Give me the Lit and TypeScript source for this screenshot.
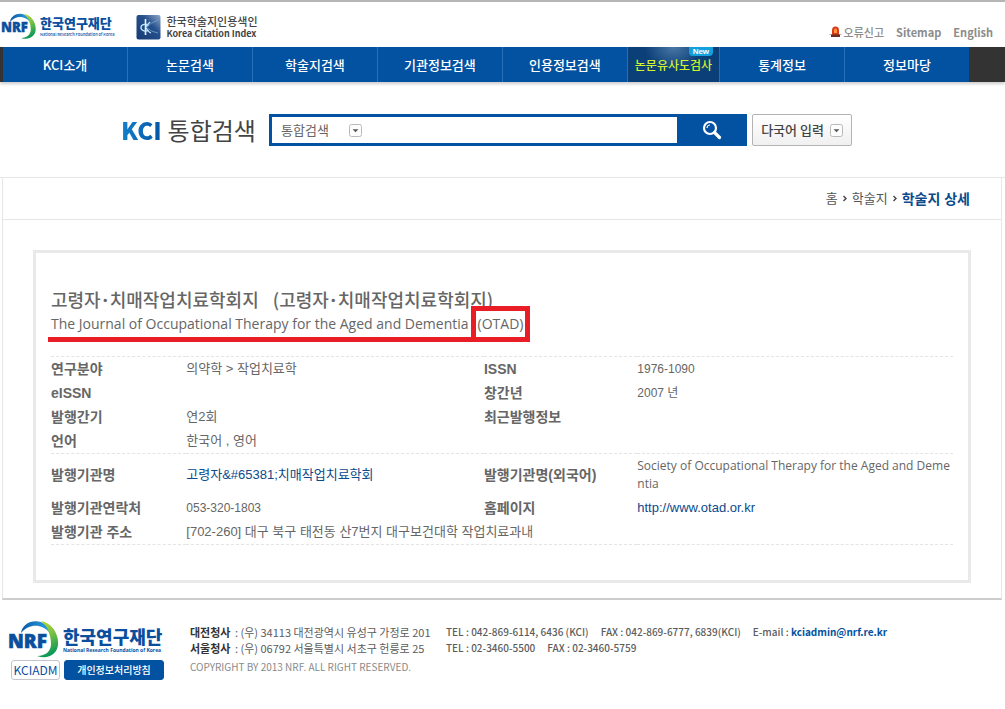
import { LitElement, html, css, svg } from "lit";
import { customElement, property, state } from "lit/decorators.js";

interface MenuItem {
  label: string;
  hot?: boolean;
}

const MENU: MenuItem[] = [
  { label: "KCI소개" },
  { label: "논문검색" },
  { label: "학술지검색" },
  { label: "기관정보검색" },
  { label: "인용정보검색" },
  { label: "논문유사도검사", hot: true },
  { label: "통계정보" },
  { label: "정보마당" },
];

const dropMark = html`<svg class="mark" viewBox="0 0 13 13" width="13" height="13" aria-hidden="true">
  <rect x="0.5" y="0.5" width="12" height="12" rx="2" fill="#fdfdfd" stroke="#b9b9b9" />
  <path d="M3.6 5.2h5.8L6.5 8.3z" fill="#555" />
</svg>`;

@customElement("nrf-logo")
export class NrfLogo extends LitElement {
  @property({ type: Boolean, reflect: true }) large = false;

  static styles = css`
    :host {
      display: flex;
      align-items: center;
      gap: 3px;
      color: #0a4f9e;
      font-family: "Noto Sans CJK KR", sans-serif;
    }
    .emblem {
      width: 36px;
      height: 27px;
      flex: none;
    }
    .names {
      display: flex;
      flex-direction: column;
      white-space: nowrap;
    }
    .ko {
      font-size: 13px;
      line-height: 16px;
      font-weight: 900;
    }
    .en {
      font-size: 4px;
      line-height: 7px;
      font-weight: 500;
    }
    :host([large]) .emblem {
      width: 52px;
      height: 39px;
    }
    :host([large]) .ko {
      font-size: 18px;
      line-height: 20px;
    }
    :host([large]) .en {
      font-family: "Open Sans", sans-serif;
      font-size: 5px;
      line-height: 8px;
      font-weight: bold;
    }
  `;

  render() {
    return html`
      <svg class="emblem" viewBox="0 0 52 39" role="img" aria-label="NRF">
        <defs>
          <linearGradient id="g" x1="0" y1="0" x2="0.3" y2="1">
            <stop offset="0" stop-color="#c3d92b" />
            <stop offset="0.5" stop-color="#7cc142" />
            <stop offset="1" stop-color="#0e9a57" />
          </linearGradient>
          <linearGradient id="b" x1="0" y1="0" x2="1" y2="0">
            <stop offset="0" stop-color="#0a58a6" />
            <stop offset="1" stop-color="#2ba3dc" />
          </linearGradient>
        </defs>
        <path d="M33 1C44 3 51 14 50 25C49 34 40 40 29 36C38 36 43 31 43 24C43 14 39 7 33 1Z" fill="url(#g)" />
        <path d="M13 13C14 4 24-1 33 2C37 4 40 8 41 12C35 5 22 2 13 13Z" fill="url(#b)" />
        ${svg`<text x="0" y="28" font-family="Open Sans" font-weight="800" font-size="19" fill="#0a4f9e" stroke="#0a4f9e" stroke-width="0.6">NRF</text>`}
      </svg>
      <span class="names">
        <span class="ko">한국연구재단</span>
        <span class="en">National Research Foundation of Korea</span>
      </span>
    `;
  }
}

@customElement("app-root")
export class AppRoot extends LitElement {
  @state() private query = "";

  static styles = css`
    :host {
      display: block;
      background: #fff;
      color: #666;
      font: 13px/18px "Liberation Sans", "Noto Sans CJK KR", sans-serif;
    }
    * {
      box-sizing: border-box;
    }
    a {
      color: inherit;
      text-decoration: none;
    }
    h1, h2, p, ul, ol {
      margin: 0;
      padding: 0;
      font-weight: normal;
      list-style: none;
    }
    button, input, select {
      font: inherit;
      color: inherit;
      border: 0;
      padding: 0;
      margin: 0;
      background: none;
    }
    .ui {
      font-family: "Noto Sans CJK KR", sans-serif;
    }
    .mark {
      display: block;
      flex: none;
    }

    .top {
      display: flex;
      align-items: center;
      height: 47px;
      border-top: 2px solid #b5b5b5;
      padding: 4px 12px 0 1px;
    }
    .kci {
      display: flex;
      align-items: center;
      gap: 5px;
      margin-left: 22px;
      color: #444;
      white-space: nowrap;
    }
    .kci-names {
      display: flex;
      flex-direction: column;
      font-size: 11px;
      line-height: 14px;
      font-weight: 500;
    }
    .kci-en {
      font-size: 9px;
      line-height: 12px;
      font-weight: bold;
    }
    .util {
      display: flex;
      gap: 12px;
      margin-left: auto;
      padding-top: 10px;
      color: #8c8c8c;
      font-size: 11px;
      line-height: 16px;
      font-weight: 500;
    }
    .util a {
      display: flex;
      align-items: center;
      gap: 2px;
    }
    .util .lat {
      font-weight: bold;
    }

    .nav {
      background: #333;
      padding: 0 3px;
      box-shadow: 0 2px 3px #ccc;
    }
    .menu {
      display: flex;
      max-width: 966px;
      height: 35px;
      background: #0352a1;
    }
    .menu li {
      flex: 125 1 0;
      display: grid;
      border-left: 1px solid #2670b5;
    }
    .menu li:first-child {
      border-left: 0;
    }
    .menu a {
      grid-area: 1 / 1;
      place-self: center;
      color: #fff;
      font-size: 13px;
      font-weight: 500;
      white-space: nowrap;
    }
    .menu .hot {
      flex-grow: 92;
      background: radial-gradient(ellipse at 50% 0, #4a78a6 0, #0b3f78 45%);
    }
    .menu .hot a {
      color: #d5f02c;
      font-size: 12px;
    }
    .new {
      grid-area: 1 / 1;
      place-self: start end;
      margin-right: 6px;
      padding: 0 4px;
      border-radius: 0 0 4px 4px;
      background: #12a1dc;
      color: #fff;
      font: bold 8px/9px "Liberation Sans", sans-serif;
    }

    .search {
      display: flex;
      align-items: center;
      padding: 32px 24px 31px 121px;
    }
    .search-title {
      display: flex;
      gap: 6px;
      width: 148px;
      color: #444;
      font-size: 24px;
      line-height: 32px;
      white-space: nowrap;
    }
    .search-title b {
      color: #0a6cba;
      background: linear-gradient(100deg, #1483cf, #0352a1);
      background-clip: text;
      -webkit-text-fill-color: transparent;
      font-weight: 900;
    }
    .box {
      display: flex;
      flex: 0 1 478px;
      height: 32px;
      border: 3px solid #0352a1;
      border-right: 0;
    }
    .scope {
      display: grid;
      align-items: center;
      width: 90px;
    }
    .scope select {
      grid-area: 1 / 1;
      appearance: none;
      width: 100%;
      padding-left: 9px;
      font-size: 13px;
    }
    .scope .mark {
      grid-area: 1 / 1;
      justify-self: end;
      pointer-events: none;
    }
    .box input {
      flex: 1;
      min-width: 0;
      padding: 0 8px;
      outline: 0;
    }
    .go {
      display: grid;
      place-items: center;
      width: 70px;
      margin: -3px 0;
      background: #0352a1;
    }
    .lang {
      display: flex;
      align-items: center;
      justify-content: center;
      gap: 6px;
      width: 100px;
      height: 32px;
      margin-left: 5px;
      border: 1px solid #b4b4b4;
      border-radius: 2px;
      background: linear-gradient(#fff, #f0f0f0);
      color: #444;
      font-size: 13px;
      font-weight: 500;
      white-space: nowrap;
    }

    .line {
      border-top: 1px solid #e6e6e6;
    }
    .frame {
      margin: 0 3px 0 2px;
      border: 1px solid #e6e6e6;
      border-top: 0;
      border-bottom: 2px solid #ccc;
    }
    .crumbs {
      display: flex;
      align-items: center;
      justify-content: flex-end;
      gap: 5px;
      height: 42px;
      padding-right: 31px;
      border-bottom: 1px solid #e6e6e6;
      color: #555;
    }
    .crumbs li {
      display: flex;
      align-items: center;
      gap: 5px;
    }
    .crumbs .here {
      color: #0b4a8c;
      font-size: 14px;
      font-weight: bold;
    }
    .card {
      margin: 30px 30px 15px;
      padding: 36px 15px 35px;
      border: 3px solid #e9e9e9;
    }
    .title {
      display: flex;
      flex-wrap: wrap;
      column-gap: 14px;
      font-family: "Noto Sans CJK KR", sans-serif;
      font-size: 18px;
      line-height: 20px;
      font-weight: 500;
    }
    .subtitle {
      display: flex;
      align-items: flex-end;
      width: fit-content;
      margin: -3px 0 14px -3px;
      font-family: "Open Sans", sans-serif;
      font-size: 14px;
      line-height: 26px;
    }
    .underlined {
      padding: 0 2px 0 3px;
      border-bottom: 5px solid #e91d25;
    }
    .boxed {
      padding: 0 2px;
      border: 5px solid #e91d25;
    }

    .info {
      width: 100%;
      border-collapse: collapse;
      table-layout: fixed;
    }
    .c1 { width: 15%; }
    .c2 { width: 33%; }
    .c3 { width: 17%; }
    .c4 { width: 35%; }
    .info th, .info td {
      height: 24px;
      padding: 3px 0;
      text-align: left;
      word-break: break-all;
    }
    .info th {
      font-size: 14px;
      font-weight: bold;
    }
    .info tbody {
      border-top: 1px dashed #e4e4e4;
      border-bottom: 1px dashed #e4e4e4;
    }
    .info .num {
      font-size: 12px;
    }
    .info .lat {
      font-family: "Open Sans", sans-serif;
      font-size: 12px;
      word-break: normal;
    }
    .info a {
      color: #0b4a8c;
    }

    .foot {
      display: flex;
      gap: 26px;
      padding: 20px 8px 28px;
    }
    .brand {
      display: flex;
      flex-direction: column;
      gap: 1px;
      width: 156px;
    }
    .links {
      display: flex;
      gap: 4px;
      margin-left: 3px;
    }
    .links a {
      height: 20px;
      border: 1px solid #c4c4cc;
      border-radius: 3px;
      color: #0a4f9e;
      font-size: 12px;
      line-height: 18px;
      text-align: center;
      width: 49px;
    }
    .links .privacy {
      flex: 1;
      border-color: #0352a1;
      background: #0352a1;
      color: #fff;
      font-size: 10px;
      font-weight: 500;
    }
    .contact {
      display: grid;
      grid-template-columns: 242px auto;
      column-gap: 14px;
      align-content: start;
      padding-top: 4px;
      color: #5c5c5c;
      font-size: 11px;
      line-height: 16px;
      white-space: nowrap;
    }
    .contact b {
      margin-right: 2px;
      color: #333;
    }
    .tel {
      display: flex;
      gap: 12px;
      font-size: 10px;
      font-weight: 500;
    }
    .contact .mail {
      color: #0352a1;
      font-weight: bold;
    }
    .copy {
      grid-column: 1 / -1;
      padding-top: 3px;
      color: #8a8a8a;
      font-size: 10px;
    }
  `;

  private onInput(e: Event) {
    this.query = (e.target as HTMLInputElement).value;
  }

  render() {
    return html`
      <header class="ui">
        <div class="top">
          <nrf-logo></nrf-logo>
          <a class="kci" href="#">
            <svg width="25" height="26" viewBox="0 0 25 26" aria-hidden="true">
              <defs>
                <linearGradient id="k" x1="0" y1="1" x2="1" y2="0">
                  <stop offset="0" stop-color="#163a74" />
                  <stop offset="0.6" stop-color="#26508c" />
                  <stop offset="1" stop-color="#8fa9c8" />
                </linearGradient>
              </defs>
              <rect x="0.5" y="1" width="24" height="24.5" rx="2" fill="url(#k)" />
              <path d="M9.500 5v16" stroke="#e6f4ff" stroke-width="1.600" />
              <path d="M12.500 11.500C11 9.500 5 10 5 13.500s5 4.500 7.500 2.500" fill="none" stroke="#c5e6fa" stroke-width="1.300" />
              <path d="M14 8Q9 13 10 13.500Q12 18 15 19" fill="none" stroke="#c5e6fa" stroke-width="1.200" />
              <path d="M22 6Q14 9 10.500 13.500Q15 18 22 19" fill="none" stroke="#6fa6d6" stroke-width="0.800" />
            </svg>
            <span class="kci-names">
              <span>한국학술지인용색인</span>
              <span class="kci-en">Korea Citation Index</span>
            </span>
          </a>
          <div class="util">
            <a href="#">
              <svg width="13" height="12" viewBox="0 0 13 12" aria-hidden="true">
                <path d="M0 8.5h13" stroke="#c9c2bd" />
                <path d="M3 9V4.5Q3 .6 6.5.6T10 4.500V9z" fill="#d93a1c" />
                <path d="M5 7V4.500Q5 2.500 6.500 2.500T8 4.500V7z" fill="#ff9a3c" />
                <path d="M2 8.500h9V11H2z" fill="#6b2f22" />
              </svg>
              오류신고
            </a>
            <a class="lat" href="#">Sitemap</a>
            <a class="lat" href="#">English</a>
          </div>
        </div>
        <nav class="nav">
          <ul class="menu">
            ${MENU.map(
              (m) => html`<li class=${m.hot ? "hot" : ""}>
                <a href="#">${m.label}</a>${m.hot ? html`<span class="new">New</span>` : ""}
              </li>`
            )}
          </ul>
        </nav>
      </header>

      <form class="search ui" @submit=${(e: Event) => e.preventDefault()}>
        <h1 class="search-title"><b>KCI</b><span>통합검색</span></h1>
        <div class="box">
          <div class="scope">
            <select aria-label="검색 범위">
              <option>통합검색</option>
            </select>
            ${dropMark}
          </div>
          <input type="text" aria-label="검색어" .value=${this.query} @input=${this.onInput} />
          <button class="go" type="submit" aria-label="검색">
            <svg width="20" height="20" viewBox="0 0 20 20" fill="none" stroke="#fff" aria-hidden="true">
              <circle cx="8" cy="8" r="6" stroke-width="2.200" />
              <path d="M12.500 12.500l5 5" stroke-width="3.200" stroke-linecap="round" />
              <path d="M5 8a3 3 0 0 1 3-3" stroke-width="1.200" />
            </svg>
          </button>
        </div>
        <button class="lang" type="button">다국어 입력 ${dropMark}</button>
      </form>

      <div class="line"></div>
      <main class="frame">
        <ol class="crumbs">
          <li><a href="#">홈</a></li>
          <li>
            <svg width="4" height="7" viewBox="0 0 4 7" aria-hidden="true"><path d="M.5 1L3 3.500.5 6" fill="none" stroke="#444" stroke-width="1.400" /></svg>
            <a href="#">학술지</a>
          </li>
          <li>
            <svg width="4" height="7" viewBox="0 0 4 7" aria-hidden="true"><path d="M.5 1L3 3.500.5 6" fill="none" stroke="#444" stroke-width="1.400" /></svg>
            <span class="here">학술지 상세</span>
          </li>
        </ol>

        <section class="card">
          <h2 class="title"><span>고령자･치매작업치료학회지</span> <span>(고령자･치매작업치료학회지)</span></h2>
          <p class="subtitle">
            <span class="underlined">The Journal of Occupational Therapy for the Aged and Dementia</span>
            <span class="boxed">(OTAD)</span>
          </p>
          <table class="info">
            <colgroup>
              <col class="c1" /><col class="c2" /><col class="c3" /><col class="c4" />
            </colgroup>
            <tbody>
              <tr><th>연구분야</th><td>의약학 &gt; 작업치료학</td><th>ISSN</th><td class="num">1976-1090</td></tr>
              <tr><th>eISSN</th><td></td><th>창간년</th><td class="num">2007 년</td></tr>
              <tr><th>발행간기</th><td>연2회</td><th>최근발행정보</th><td></td></tr>
              <tr><th>언어</th><td>한국어 , 영어</td><td></td><td></td></tr>
            </tbody>
            <tbody>
              <tr>
                <th>발행기관명</th>
                <td><a href="#">고령자&amp;#65381;치매작업치료학회</a></td>
                <th>발행기관명(외국어)</th>
                <td class="lat">Society of Occupational Therapy for the Aged and Deme<wbr>ntia</td>
              </tr>
              <tr>
                <th>발행기관연락처</th><td class="num">053-320-1803</td>
                <th>홈페이지</th><td><a href="http://www.otad.or.kr">http://www.otad.or.kr</a></td>
              </tr>
              <tr><th>발행기관 주소</th><td colspan="3">[702-260] 대구 북구 태전동 산7번지 대구보건대학 작업치료과내</td></tr>
            </tbody>
          </table>
        </section>
      </main>

      <footer class="foot ui">
        <div class="brand">
          <nrf-logo large></nrf-logo>
          <div class="links">
            <a href="#">KCIADM</a>
            <a class="privacy" href="#">개인정보처리방침</a>
          </div>
        </div>
        <div class="contact">
          <div><b>대전청사</b> : (우) 34113 대전광역시 유성구 가정로 201</div>
          <div class="tel">
            <span>TEL : 042-869-6114, 6436 (KCI)</span>
            <span>FAX : 042-869-6777, 6839(KCI)</span>
            <span>E-mail : <a class="mail" href="mailto:kciadmin@nrf.re.kr">kciadmin@nrf.re.kr</a></span>
          </div>
          <div><b>서울청사</b> : (우) 06792 서울특별시 서초구 헌릉로 25</div>
          <div class="tel">
            <span>TEL : 02-3460-5500</span>
            <span>FAX : 02-3460-5759</span>
          </div>
          <p class="copy">COPYRIGHT BY 2013 NRF. ALL RIGHT RESERVED.</p>
        </div>
      </footer>
    `;
  }
}
